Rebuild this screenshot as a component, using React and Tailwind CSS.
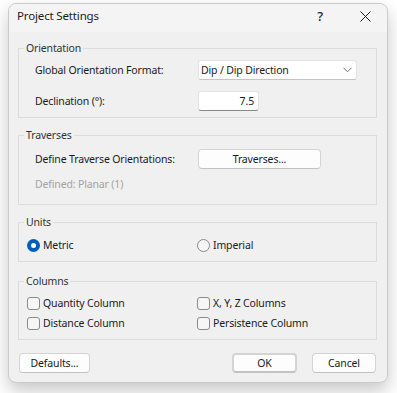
export default function App() {
  const font = { fontFamily: '"Noto Sans", "Segoe UI", sans-serif' };

  const Radio = ({ checked, label }) => (
    <div className="flex items-center gap-[3px]">
      {checked ? (
        <span className="w-[13px] h-[13px] rounded-full bg-[#005fb8] flex items-center justify-center">
          <span className="w-[5px] h-[5px] rounded-full bg-white" />
        </span>
      ) : (
        <span className="w-[13px] h-[13px] rounded-full border border-[#8a8a8a] bg-[#f6f6f6]" />
      )}
      <span>{label}</span>
    </div>
  );

  const Check = ({ label }) => (
    <div className="flex items-center gap-[3px] h-4">
      <span className="w-[13px] h-[13px] rounded-[3px] border border-[#8a8a8a] bg-[#f6f6f6]" />
      <span>{label}</span>
    </div>
  );

  const Button = ({ children, className = '' }) => (
    <div className={`h-5 flex items-center justify-center rounded-[4px] bg-[#fdfdfd] border border-[#d4d4d4] border-b-[#c2c2c2] ${className}`}>
      {children}
    </div>
  );

  return (
    <div className="min-h-screen bg-white pl-2 pt-[3px] text-[10.5px] tracking-[-0.15px] leading-4 text-[#1b1b1b]" style={font}>
      <div className="w-[380px] h-[380px] rounded-lg border border-[#cacaca] bg-[#f0f0f0] shadow-[0_8px_18px_rgba(0,0,0,0.22)] overflow-hidden flex flex-col">
        <div className="h-[28px] bg-[#f4f4f5] flex items-start pt-[4px] pl-[8px] pr-[16px] text-[11.5px]">
          <span className="flex-1">Project Settings</span>
          <span className="w-[12px] text-center mr-[34px] text-[13px] font-medium">?</span>
          <svg width="11" height="11" viewBox="0 0 11 11" className="mt-[3px]">
            <path d="M0.5 0.5L10.5 10.5M10.5 0.5L0.5 10.5" stroke="#1b1b1b" strokeWidth="1" />
          </svg>
        </div>

        <div className="flex-1 pl-[9px] pr-[10px] pt-[8px] flex flex-col">
          <fieldset className="border border-[#dcdcdc] pl-[5px] pb-[6px]">
            <legend className="px-[2px] text-[#333]">Orientation</legend>
            <div className="pl-[11px] mt-[4px] flex items-center h-5">
              <span className="w-[163px] whitespace-nowrap">Global Orientation Format:</span>
              <div className="w-[159px] h-5 bg-white border border-[#e3e3e3] border-b-[#c4c4c4] rounded-[3px] flex items-center pl-[2px] pr-[4px]">
                <span className="flex-1">Dip / Dip Direction</span>
                <svg width="9" height="6" viewBox="0 0 9 6">
                  <path d="M0.5 0.8L4.5 4.8L8.5 0.8" fill="none" stroke="#707070" strokeWidth="1" />
                </svg>
              </div>
            </div>
            <div className="pl-[11px] mt-[11px] flex items-center h-5">
              <span className="w-[163px]">Declination (°):</span>
              <div className="w-[61px] h-5 bg-white border border-[#e3e3e3] border-b-[#8a8a8a] rounded-[3px] flex items-center justify-end pr-[4px]">
                7.5
              </div>
            </div>
          </fieldset>

          <fieldset className="mt-[9px] border border-[#dcdcdc] pl-[5px] pb-[12px]">
            <legend className="px-[2px] text-[#333]">Traverses</legend>
            <div className="pl-[11px] mt-[6px] flex items-center h-5">
              <span className="w-[163px] whitespace-nowrap">Define Traverse Orientations:</span>
              <Button className="w-[123px]">Traverses...</Button>
            </div>
            <div className="pl-[11px] mt-[7px] text-[#a3a3a3]">Defined: Planar (1)</div>
          </fieldset>

          <fieldset className="mt-[9px] border border-[#dcdcdc] pl-[5px] pb-[8px]">
            <legend className="px-[2px] text-[#333]">Units</legend>
            <div className="pl-[3px] mt-[7px] flex items-center h-4">
              <div className="w-[170px]">
                <Radio checked label="Metric" />
              </div>
              <Radio label="Imperial" />
            </div>
          </fieldset>

          <fieldset className="mt-[11px] border border-[#dcdcdc] pl-[5px] pb-[8px]">
            <legend className="px-[2px] text-[#333]">Columns</legend>
            <div className="pl-[3px] mt-[6px] grid grid-cols-[170px_1fr] gap-y-1">
              <Check label="Quantity Column" />
              <Check label="X, Y, Z Columns" />
              <Check label="Distance Column" />
              <Check label="Persistence Column" />
            </div>
          </fieldset>

          <div className="mt-[13px] flex items-center pl-[1px] pr-[1px]">
            <Button className="w-[71px]">Defaults...</Button>
            <div className="flex-1" />
            <Button className="w-[65px] border-2 border-[#5d9be0] border-b-[#5d9be0]">OK</Button>
            <Button className="w-[64px] ml-[15px]">Cancel</Button>
          </div>
        </div>
      </div>
    </div>
  );
}
